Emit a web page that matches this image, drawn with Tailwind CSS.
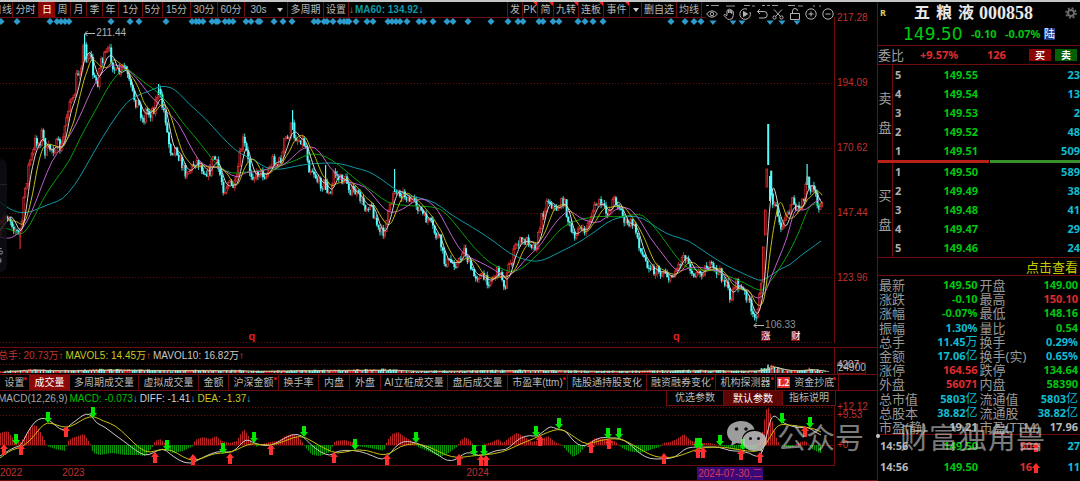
<!DOCTYPE html>
<html lang="zh-CN">
<head>
<meta charset="utf-8">
<meta name="viewport" content="width=device-width, initial-scale=1">
<title>五粮液 000858</title>
<script src="https://cdn.jsdelivr.net/npm/@tailwindcss/browser@4"></script>
</head>
<body class="bg-black">
<div class="relative min-h-screen w-full overflow-hidden border-t-2 border-[#c4c6c6] bg-black font-['Liberation_Sans','Noto_Sans_CJK_SC',sans-serif] text-[10px] leading-3 text-[#b8b8b8]">
<div class="flex w-full">

<!-- Charts -->
<main class="min-w-0 flex-1">
  <div class="relative flex">
    <nav class="flex h-4 min-w-0 flex-1 items-stretch overflow-hidden whitespace-nowrap border-b border-[#700c0c]" aria-label="周期">
      <button class="w-[13px] shrink-0 overflow-hidden border-r border-[#700c0c]"><span class="-ml-2">日线</span></button>
      <button class="w-[26px] shrink-0 border-r border-[#700c0c]">分时</button>
      <button class="w-4 shrink-0 bg-[#8c0808] text-white">日</button>
      <button class="w-4 shrink-0 border-r border-[#700c0c]">周</button>
      <button class="w-4 shrink-0 border-r border-[#700c0c]">月</button>
      <button class="w-4 shrink-0 border-r border-[#700c0c]">季</button>
      <button class="w-4 shrink-0 border-r border-[#700c0c]">年</button>
      <button class="w-6 shrink-0 border-r border-[#700c0c]">1分</button>
      <button class="w-5 shrink-0 border-r border-[#700c0c]">5分</button>
      <button class="w-7 shrink-0 border-r border-[#700c0c]">15分</button>
      <button class="w-[27px] shrink-0 border-r border-[#700c0c]">30分</button>
      <button class="w-[27px] shrink-0 border-r border-[#700c0c]">60分</button>
      <button class="w-[27px] shrink-0">30s</button>
      <button class="flex w-4 shrink-0 items-center justify-center border-r border-[#700c0c]" aria-label="更多周期"><svg class="h-1 w-[6px]" viewBox="0 0 6 4"><path d="M0 0h6L3 4z" fill="#ccc"/></svg></button>
      <button class="w-9 shrink-0 border-r border-[#700c0c]">多周期</button>
      <button class="w-[25px] shrink-0 border-r border-[#700c0c]">设置</button>
      <span class="flex items-center"><span class="w-[6px] text-[#a89c20]">↓</span><span class="font-bold text-[#0d9aa8]">MA60: 134.92</span><span class="text-[#48c8d8]">↓</span></span>
      <span class="flex-1"></span>
      <button class="w-4 shrink-0 border-x border-[#700c0c]">发</button>
      <button class="relative w-[15px] shrink-0 border-r border-[#700c0c]">PK<svg class="absolute right-0 top-0 size-1" viewBox="0 0 4 4"><path d="M0 0h4v4z" fill="#f22"/></svg></button>
      <button class="relative w-4 shrink-0 border-r border-[#700c0c]">简<svg class="absolute right-0 top-0 size-1" viewBox="0 0 4 4"><path d="M0 0h4v4z" fill="#f22"/></svg></button>
      <button class="relative w-[25px] shrink-0 border-r border-[#700c0c]">九转<svg class="absolute right-0 top-0 size-1" viewBox="0 0 4 4"><path d="M0 0h4v4z" fill="#f22"/></svg></button>
      <button class="relative w-[25px] shrink-0 border-r border-[#700c0c]">连板<svg class="absolute right-0 top-0 size-1" viewBox="0 0 4 4"><path d="M0 0h4v4z" fill="#f22"/></svg></button>
      <button class="relative w-[26px] shrink-0 border-r border-[#700c0c]">事件<svg class="absolute right-0 top-0 size-1" viewBox="0 0 4 4"><path d="M0 0h4v4z" fill="#f22"/></svg></button>
      <button class="flex w-3 shrink-0 items-center justify-center border-r border-[#700c0c]" aria-label="更多"><svg class="h-1 w-[6px]" viewBox="0 0 6 4"><path d="M0 0h6L3 4z" fill="#ccc"/></svg></button>
      <button class="w-[35px] shrink-0 border-r border-[#700c0c]">删自选</button>
      <button class="w-[25px] shrink-0 border-r border-[#700c0c]">均线</button>
      <span class="w-[133px] shrink-0"></span>
    </nav>
    <div class="w-[42px] shrink-0"></div>
    <!-- Floating drawing tools -->
    <div class="absolute right-[43px] top-0 z-10 flex h-[18px] w-[128px] items-end justify-between bg-black text-[#b4b4b4]">
      <svg class="absolute left-0 top-[3px] h-[2px] w-[118px]" viewBox="0 0 118 2" stroke="#999" fill="none"><path d="M0 .5h3M5 .5h8M20 1h9M38 .5h6M46 1h3M56 .5h3M61 .5h3M66 .5h6M82 .5h7M92 1h5M107 1h2M113 1h2"/></svg>
      <button aria-label="显示"><svg class="size-3" viewBox="0 0 12 12" fill="none" stroke="currentColor"><path d="M.5 6Q6-.5 11.5 6 6 12.500 .5 6z"/><circle cx="6" cy="6" r="1.800"/></svg></button>
      <button aria-label="拖动"><svg class="size-3" viewBox="0 0 12 12" fill="none" stroke="currentColor"><path d="M4 7.500V2.500q.7-1 1.500 0V5 1.500q.8-1 1.600 0V5 2q.8-.9 1.600 0v3.500-2q.8-.8 1.600 0v4q0 4-4 4-2 0-3-1.500L1 7.500q0-1.200 1.200-1L4 8"/></svg></button>
      <button aria-label="播放"><svg class="size-3" viewBox="0 0 12 12" fill="none" stroke="currentColor"><path d="M8 1.100A5.300 5.300 0 1 0 11 4"/><path d="M4.500 3.500v5L8.500 6z" fill="currentColor"/></svg></button>
      <button aria-label="撤销"><svg class="size-3" viewBox="0 0 12 12" fill="none" stroke="currentColor"><path d="M4 1L1.500 3.500 4 6M1.500 3.500H8a3 3 0 0 1 0 6.500H3"/></svg></button>
      <button aria-label="剪切"><svg class="size-3" viewBox="0 0 12 12" fill="none" stroke="currentColor"><path d="M2 1.500l6.500 7M10 1.500l-6.500 7"/><circle cx="2.500" cy="9.500" r="1.600"/><circle cx="9.500" cy="9.500" r="1.600"/></svg></button>
      <button aria-label="锁定"><svg class="size-3" viewBox="0 0 12 12" fill="none" stroke="currentColor"><path d="M1.500 5.500h9v6h-9zM3.500 5.500V3q0-2.500 2.500-2.500T8.500 3"/></svg></button>
      <button aria-label="放大"><svg class="size-3" viewBox="0 0 12 12" fill="none" stroke="currentColor"><circle cx="6" cy="6" r="5.200"/><path d="M3.500 6h5M6 3.500v5"/></svg></button>
      <button aria-label="缩小"><svg class="size-3" viewBox="0 0 12 12" fill="none" stroke="currentColor"><circle cx="6" cy="6" r="5.200"/><path d="M3.500 6h5"/></svg></button>
    </div>
  </div>

  <section class="flex" aria-label="K线">
    <div class="relative h-[325px] min-w-0 flex-1 border-r border-[#700c0c]">
      <svg id="price" class="block h-full w-full" viewBox="0 18 834 325" preserveAspectRatio="none"></svg>
      <span class="absolute left-[10.100%] top-[9px] flex items-center text-[#b0b0b0]"><svg class="h-[7px] w-3" viewBox="0 0 12 7" fill="none" stroke="#bbb"><path d="M11 3.500H1M3.500 1L1 3.500 3.500 6"/></svg>211.44</span>
      <span class="absolute left-[90.300%] top-[301px] flex items-center text-[#909090]"><svg class="h-[7px] w-3" viewBox="0 0 12 7" fill="none" stroke="#bbb"><path d="M11 3.500H1M3.500 1L1 3.500 3.500 6"/></svg>106.33</span>
      <b class="absolute left-[29.800%] top-[312px] text-[11px] text-[#e02020]">q</b>
      <b class="absolute left-[80.700%] top-[312px] text-[11px] text-[#e02020]">q</b>
      <span class="absolute left-[91.300%] top-[313px] h-[10px] bg-[#8c0c0c] text-[9px] leading-[10px] text-white">涨</span>
      <span class="absolute left-[94.900%] top-[313px] h-[10px] bg-[#8c0c0c] text-[9px] leading-[10px] text-white">财</span>
      <div class="absolute left-0 top-[141px] flex h-[113px] w-[7px] flex-col justify-between rounded-r-lg bg-[#0e0f14]/80 pb-[9px] pt-[25px]">
        <span class="h-px bg-[#22242a]"></span>
        <svg class="h-[15px] w-[3px]" viewBox="0 0 3 15" fill="none" stroke="#999"><path d="M0 .5h1.500M0 3h1q1.500 0 1.500 1.500T1 6H0M0 11h1.500M0 12.500h1q1 1-1 2"/></svg>
      </div>
    </div>
    <div class="-mt-[6px] w-[42px] shrink-0 pl-[2px] text-[#c03030]">
      <div class="h-[65px]">217.28</div><div class="h-[65px]">194.09</div><div class="h-[65px]">170.62</div><div class="h-[65px]">147.44</div><div>123.96</div>
    </div>
  </section>

  <section class="mt-1 flex border-t border-[#700c0c]" aria-label="成交量">
    <div class="min-w-0 flex-1 border-r border-[#700c0c]">
      <div class="flex h-4 items-center gap-[2px] whitespace-nowrap">
        <span class="-ml-[2px] text-[#c03030]">总手: 20.73万<span class="text-[#f04040]">↑</span></span>
        <span class="text-[#c8c820]">MAVOL5: 14.45万<span class="text-[#f04040]">↑</span></span>
        <span class="text-[#c8c8c8]">MAVOL10: 16.82万<span class="text-[#f04040]">↑</span></span>
      </div>
      <svg id="volume" class="block h-[9px] w-full overflow-visible" viewBox="0 364 834 9" preserveAspectRatio="none"></svg>
    </div>
    <div class="relative w-[42px] shrink-0 pl-[2px] pt-[11px] text-[#b8b8b8]">
      <div class="h-[3px]">4207</div><div class="w-[29px] overflow-visible border border-[#700c0c] leading-[10px]">24900</div>
    </div>
  </section>

  <nav class="flex h-[17px] items-stretch overflow-hidden whitespace-nowrap border-y border-[#700c0c]" aria-label="指标">
    <button class="relative w-[29px] shrink-0">设置<i class="absolute right-[2px] top-[2px] size-[3px] rounded-full bg-[#e01010]"></i></button>
    <button class="w-[41px] shrink-0 bg-[#8c0808] text-white">成交量</button>
    <button class="w-[69px] shrink-0 border-r border-[#700c0c]">多周期成交量</button>
    <button class="w-[60px] shrink-0 border-r border-[#700c0c]">虚拟成交量</button>
    <button class="w-[30px] shrink-0 border-r border-[#700c0c]">金额</button>
    <button class="relative w-[50px] shrink-0 border-r border-[#700c0c]">沪深金额<i class="absolute right-[1px] top-[2px] size-[3px] rounded-full bg-[#e01010]"></i></button>
    <button class="w-10 shrink-0 border-r border-[#700c0c]">换手率</button>
    <button class="w-[31px] shrink-0 border-r border-[#700c0c]">内盘</button>
    <button class="w-[31px] shrink-0 border-r border-[#700c0c]">外盘</button>
    <button class="w-[67px] shrink-0 border-r border-[#700c0c]">AI立桩成交量</button>
    <button class="w-[60px] shrink-0 border-r border-[#700c0c]">盘后成交量</button>
    <button class="relative w-[60px] shrink-0 border-r border-[#700c0c]">市盈率(ttm)<i class="absolute right-[1px] top-[2px] size-[3px] rounded-full bg-[#e01010]"></i></button>
    <button class="w-[79px] shrink-0 border-r border-[#700c0c]">陆股通持股变化</button>
    <button class="relative w-[69px] shrink-0 border-r border-[#700c0c]">融资融券变化<i class="absolute right-[1px] top-[2px] size-[3px] rounded-full bg-[#e01010]"></i></button>
    <button class="relative w-[60px] shrink-0 border-r border-[#700c0c]">机构探测器<i class="absolute right-[1px] top-[2px] size-[3px] rounded-full bg-[#e01010]"></i></button>
    <button class="relative flex w-[63px] shrink-0 items-center justify-center gap-1 border-r border-[#700c0c] pr-[3px]"><b class="bg-[#e02828] px-px font-['Liberation_Serif'] leading-[11px] text-white">L2</b>资金抄底<i class="absolute right-[2px] top-[2px] size-[3px] rounded-full bg-[#e01010]"></i></button>
  </nav>

  <section aria-label="MACD">
    <div class="flex h-[15px] items-stretch whitespace-nowrap">
      <div class="flex min-w-0 flex-1 items-center gap-[2px] overflow-hidden">
        <span class="-ml-[2px] text-[#a8a8a8]">MACD(12,26,9)</span>
        <span class="text-[#00c000]">MACD: -0.073<span class="text-[#48c8d8]">↓</span></span>
        <span class="text-[#d0d0d0]">DIFF: -1.41<span class="text-[#48c8d8]">↓</span></span>
        <span class="text-[#c8c820]">DEA: -1.37<span class="text-[#48c8d8]">↓</span></span>
      </div>
      <button class="w-[58px] border-x border-b border-[#700c0c]">优选参数</button>
      <button class="w-[58px] bg-[#5c0606] text-white">默认参数</button>
      <button class="w-[54px] border-x border-b border-[#700c0c]">指标说明</button>
      <div class="w-[41px] shrink-0"></div>
    </div>
    <div class="flex">
      <div class="h-[60px] min-w-0 flex-1 border-b border-r border-[#700c0c]">
        <svg id="macd" class="block h-full w-full overflow-visible" viewBox="0 405 834 59" preserveAspectRatio="none"></svg>
      </div>
      <div class="-mt-[5px] w-[42px] shrink-0 pl-[2px] text-[#c03030]"><div class="h-2">+12.12</div><div class="h-[30px]">+9.53</div><div>+0</div></div>
    </div>
    <div class="flex h-[14px] items-center text-[#c03030]">
      <span class="w-[7.100%]">2022</span><span class="w-[46.100%]">2023</span><span class="w-[26.300%]">2024</span><span class="whitespace-nowrap bg-[#3a0878] px-px leading-[13px] text-[#d83858]">2024-07-30,二</span>
    </div>
    <div class="h-[2px] border-t border-[#700c0c]"><div class="ml-[11.200%] h-px w-[4.500%] bg-[#8c0808]"></div></div>
  </section>
</main>

<!-- Quote panel -->
<aside class="w-[203px] shrink-0 border-l border-[#700c0c] font-['Noto_Sans','Noto_Sans_CJK_SC',sans-serif] text-[11px] font-bold">
  <header class="h-11 border-b border-[#700c0c]">
    <div class="flex h-[21px] items-center">
      <span class="w-9 pl-[2px] text-[9px] text-[#d8d060]">R</span>
      <h1 class="flex flex-1 items-center gap-[5px] whitespace-nowrap font-['Liberation_Serif','Noto_Sans_CJK_SC',serif] text-[18px] leading-5 text-[#e8e8e8]"><span class="flex gap-[6px] text-[16px]"><span>五</span><span>粮</span><span>液</span></span>000858</h1>
      <button class="mr-[3px]" aria-label="设置"><svg class="size-3" viewBox="0 0 12 12" fill="none" stroke="#6c6c6c"><circle cx="6" cy="6" r="3" stroke-width="2"/><circle cx="6" cy="6" r="4.900" stroke-width="1.800" stroke-dasharray="1.900 1.950"/></svg></button>
    </div>
    <div class="flex h-[22px] items-center whitespace-nowrap text-[#00c810]">
      <span class="w-[93px] pl-[25px] font-['DejaVu_Sans'] text-[17px] font-normal">149.50</span>
      <span class="w-[34px]">-0.10</span><span class="w-[39px]">-0.07%</span>
      <span class="bg-[#1c3c88] text-[11px] font-normal leading-[12px] text-white">陆</span>
    </div>
  </header>
  <div class="flex h-[19px] items-center border-b border-[#700c0c] text-[#e02c2c]">
    <span class="w-[42px] text-[13px] font-normal text-[#a0a0a0]">委比</span><span class="w-[67px]">+9.57%</span><span class="w-[42px]">126</span>
    <button class="mr-1 h-3 w-[22px] bg-[#8c0404] text-[10px] leading-3 text-white">买</button>
    <button class="h-3 w-[22px] bg-[#046004] text-[10px] leading-3 text-white">卖</button>
  </div>
  <div class="flex h-[95px]">
    <div class="flex w-[15px] flex-col items-center justify-center gap-3 border-r border-[#700c0c] text-[13px] font-normal leading-[17px] text-[#a0a0a0]"><span>卖</span><span>盘</span></div>
    <table class="h-full flex-1 text-[#00c810]" id="asks"><tbody></tbody></table>
  </div>
  <div class="flex h-[3px]"><i class="w-[55%] bg-[#b82018]"></i><i class="ml-px flex-1 bg-[#38902c]"></i></div>
  <div class="flex h-[95px] border-b border-[#700c0c]">
    <div class="flex w-[15px] flex-col items-center justify-center gap-3 border-r border-[#700c0c] text-[13px] font-normal leading-[17px] text-[#a0a0a0]"><span>买</span><span>盘</span></div>
    <table class="h-full flex-1 text-[#00c810]" id="bids"><tbody></tbody></table>
  </div>
  <div class="flex h-[18px] items-center justify-end border-b border-[#700c0c] pr-[2px] text-[13px] font-normal"><a href="#" class="text-[#c8c800]">点击查看</a></div>
  <dl class="grid h-[159px] grid-cols-2 gap-x-[2px] border-b border-[#700c0c] pl-px pr-[2px] pt-[2px] font-bold" id="stats"></dl>
  <table class="h-[42px] w-full text-[#b8b8b8]"><tbody>
    <tr><td class="w-[52px] pl-[2px]">14:56</td><td class="w-12 text-right text-[#00c810]">149.50</td><td class="text-right text-[#e02c2c]">50<svg class="inline h-[10px] w-2" viewBox="0 0 8 10"><path d="M4 0l4 5H6v5H2V5H0z" fill="#ff2c2c"/></svg></td><td class="w-10 text-right text-[#10bcd0]">27</td></tr>
    <tr><td class="pl-[2px]">14:56</td><td class="text-right text-[#00c810]">149.50</td><td class="text-right text-[#e02c2c]">16<svg class="inline h-[10px] w-2" viewBox="0 0 8 10"><path d="M4 0l4 5H6v5H2V5H0z" fill="#ff2c2c"/></svg></td><td class="text-right text-[#10bcd0]">11</td></tr>
  </tbody></table>
</aside>
</div>

<!-- Watermark -->
<div class="pointer-events-none absolute right-[35px] top-[414px] z-20 flex items-center whitespace-nowrap font-['Noto_Sans_CJK_SC',sans-serif] text-[29px] font-normal leading-10 text-[#d0d0d0]/60">
  <svg class="mr-[10px] h-8 w-10" viewBox="0 0 40 32"><path d="M14 1C6 1 0 6 0 12.500c0 4 2 7 5 9L4 26l5.500-3c2 .6 4 .8 6 .6C13 15 20 9 27.500 9.500 26 4 20.500 1 14 1z" fill="#b8b8b8" fill-opacity=".85"/><path d="M27.500 11C20.500 11 15.500 15.500 15.500 21s5 10 12 10c1.500 0 3-.2 4.400-.7l4.100 2-1-3.600c2.700-1.800 4.500-4.500 4.500-7.700 0-5.500-5-10-12-10z" fill="#c4c4c4" fill-opacity=".85"/><g fill="#111"><circle cx="9.500" cy="9" r="1.800"/><circle cx="19" cy="9" r="1.800"/><circle cx="23.500" cy="18.500" r="1.500"/><circle cx="31.500" cy="18.500" r="1.500"/></g></svg>
  <span>公众号</span><i class="ml-3 mr-5 size-1 rounded-full bg-[#c8c8c8]"></i><span>财富独角兽</span>
</div>
</div>

<template id="level"><tr><td class="w-[14px] pl-[2px] text-[#b0b0b0]"></td><td class="w-[71px] text-right"></td><td class="text-right text-[#10bcd0]"></td></tr></template>
<template id="stat"><div class="flex items-center justify-between whitespace-nowrap leading-[14px]"><dt class="text-[13px] font-normal text-[#989898]"></dt><dd></dd></div></template>

<script>
const NS = 'http://www.w3.org/2000/svg';
function add(svg, tag, attrs) {
  const e = document.createElementNS(NS, tag);
  for (const k in attrs) e.setAttribute(k, attrs[k]);
  svg.appendChild(e);
}
const parse = s => s.trim().split(/\s+/).map(p => p.split(',').map(Number));
function at(pts, x) {
  for (let i = 1; i < pts.length; i++) if (x <= pts[i][0]) {
    const [a, b] = pts[i - 1], [c, d] = pts[i];
    return b + (d - b) * (x - a) / (c - a);
  }
  return pts[pts.length - 1][1];
}
let seed = 7;
const rnd = () => (seed = (seed * 16807) % 2147483647) / 2147483647;
function curve(svg, pts, color, w = 1) {
  let d = `M${pts[0]}`;
  for (let i = 1; i < pts.length - 1; i++) d += `Q${pts[i]} ${(pts[i][0] + pts[i + 1][0]) / 2},${(pts[i][1] + pts[i + 1][1]) / 2}`;
  d += `L${pts[pts.length - 1]}`;
  add(svg, 'path', { d, fill: 'none', stroke: color, 'stroke-width': w });
}
const grid = (svg, ys) => ys.forEach(y => add(svg, 'path', { d: `M0 ${y}.5H834`, stroke: '#6a0c0c', 'stroke-dasharray': '1 2' }));

/* price */
const P = document.getElementById('price');
grid(P, [83, 148, 213, 277, 342]);
const path = parse(`0,232 5,216 8,214 12,222 16,230 19,237 22,220 25,190 28,170 30,160 33,155 36,137 38,145 42,133 46,155 50,148 56,146 62,148 65,125 69,100 73,105 77,75 80,68 82,58 84,42 87,60 90,50 94,82 98,80 101,58 104,60 108,52 111,56 116,75 120,72 125,67 128,80 132,95 136,100 140,108 143,122 146,110 150,113 155,105 158,90 161,102 165,115 168,140 171,152 176,148 180,160 185,172 190,170 196,160 200,165 205,172 210,172 213,155 217,165 221,178 224,192 228,182 232,187 236,185 239,160 243,140 246,150 250,173 255,176 260,172 266,176 271,165 273,158 277,165 282,158 285,137 288,140 292,122 294,135 298,140 302,139 306,148 309,168 313,170 318,182 323,185 325,180 328,194 331,195 334,170 338,178 342,180 346,180 350,190 355,192 360,198 366,208 370,203 375,218 379,233 384,232 388,215 392,200 394,186 397,192 401,193 405,195 410,200 415,205 420,208 424,218 430,222 436,236 440,240 444,262 449,262 455,263 460,262 463,247 466,254 469,265 474,276 480,275 485,280 490,281 495,275 498,270 502,278 505,287 509,265 512,260 515,248 518,242 523,242 529,240 533,246 537,245 541,220 545,207 548,199 552,205 555,210 560,205 564,200 568,220 572,235 575,240 578,225 583,233 588,225 592,212 598,202 602,205 606,213 610,210 613,199 618,203 622,215 627,226 632,222 637,235 641,253 646,262 650,265 654,272 658,270 661,274 665,270 670,281 674,272 679,265 684,253 688,262 692,271 697,274 703,271 708,265 714,270 720,273 725,283 728,290 731,300 735,282 740,288 746,295 749,300 752,318 755,318 758,305 761,290 763,270 765,230 767,180 769,165 771,190 774,208 777,205 779,226 782,234 785,220 790,210 793,200 796,210 800,208 804,198 807,170 809,190 813,190 817,200 819,208 822,205`);
const step = 1.65, closes = [];
for (let i = 0, prev = 235; i * step <= 822; i++) {
  const x = i * step + 0.5, c = at(path, x) + (rnd() - 0.5) * (x < 165 ? 15 : 10);
  const spike = x > 762 && x < 771;
  const top = Math.min(prev, c), h = Math.max(1, Math.abs(c - prev));
  const up = c < prev, col = up ? '#e03030' : '#54fcfc';
  if (!spike) {
    add(P, 'path', { d: `M${x} ${top - rnd() * 4}V${top + h + rnd() * 4}`, stroke: col, 'stroke-width': 0.8 });
    add(P, 'rect', { x: x - 0.8, y: top, width: up ? 1.4 : 2, height: h, fill: up ? '#300' : col, stroke: up ? col : 'none', 'stroke-width': 0.7 });
  }
  closes.push([x, at(path, x)]);
  prev = c;
}
[[763, 247, 282], [765, 210, 235], [766.5, 169, 187]].forEach(([x, a, b]) => add(P, 'rect', { x: x - 0.5, y: a, width: 1.6, height: b - a, fill: '#300', stroke: '#e83030', 'stroke-width': 0.8 }));
add(P, 'rect', { x: 767.2, y: 124, width: 2, height: 41, fill: '#54fcfc' });
add(P, 'rect', { x: 769, y: 176, width: 2, height: 25, fill: '#54fcfc' });
[[84, 34, 60], [158, 84, 95], [292, 110, 130], [325, 165, 190], [394, 169, 192], [806.5, 164, 185], [19.5, 232, 249]].forEach(([x, a, b], i) => add(P, 'rect', { x, y: a, width: 1.2, height: b - a, fill: i == 6 ? '#d82c2c' : '#54fcfc' }));

curve(P, parse('0,202 10,210 25,214 40,208 52,203 62,200 75,185 85,168 95,150 110,125 125,104 135,96 150,91 158,87 165,86 175,89 190,105 205,118 220,135 235,150 245,156 255,160 265,168 280,170 300,165 320,163 340,163 355,168 368,171 380,178 393,188 405,195 420,198 435,202 450,214 465,223 480,232 495,242 510,254 525,260 540,262 560,252 580,242 600,228 612,219 628,216 642,217 660,230 672,236 688,240 705,252 725,265 740,272 755,279 762,281 770,276 780,269 790,265 800,256 810,249 821,241'), '#0c98a6');
curve(P, parse('0,228 8,228 15,232 22,235 30,225 38,209 47,192 60,174 70,160 80,138 90,120 100,102 112,80 122,70 128,69 135,75 145,83 155,90 162,97 172,107 182,122 195,137 207,152 218,167 232,174 245,172 260,171 275,168 285,164 297,160 308,154 320,154 332,160 345,170 360,183 375,193 388,203 400,205 415,206 437,207 447,214 460,230 475,249 490,263 500,268 510,272 520,270 530,262 545,247 555,235 565,225 580,219 600,216 615,217 627,216 637,214 645,216 660,234 672,251 682,264 692,270 715,270 730,277 745,283 755,289 763,291 770,282 780,268 790,251 800,230 808,208 815,203 821,205'), '#089c08');
curve(P, parse('0,237 8,239 15,236 22,230 32,212 42,185 52,160 62,147 72,132 82,112 92,88 102,72 112,64 120,66 130,71 140,82 150,96 160,105 168,113 178,122 188,142 198,160 207,167 220,167 232,176 240,177 245,172 260,172 272,167 283,166 293,157 300,150 307,147 315,147 322,155 330,168 342,180 352,183 365,186 375,198 385,210 392,213 402,210 413,202 421,198 430,202 438,210 448,229 458,247 466,256 480,262 495,270 505,278 515,272 525,260 533,252 540,246 552,227 562,215 570,210 580,218 590,222 600,223 612,212 620,207 630,208 640,220 650,238 662,253 673,268 680,272 690,267 700,267 712,270 722,272 735,283 745,288 753,296 758,299 765,294 770,280 778,260 787,239 794,210 800,210 806,210 813,203 821,199'), '#c060c8');
function average(n) {
  return closes.map(([x], i) => {
    const w = closes.slice(Math.max(0, i - n + 1), i + 1);
    return [x, w.reduce((s, p) => s + p[1], 0) / w.length];
  });
}
curve(P, average(10), '#c8c010');
curve(P, average(5), '#d8d8d8');

/* event markers */
[1,17,50,57,61,65,69,111,130,139,166,192,196,199,203,212,216,218,225,229,233,246,251,258,260,274,283,292,314,318,324,327,333,340,344,347,349,356,367,373,388,392,396,400,407,419,424,433,447,453,468,491,508,518,523,539,543,553,559,578,585,593,603,671,685,694,701].forEach(x =>
  add(P, 'path', { d: `M${x - 3.5} 21.5l3.500-3.500 3.500 3.500-3.500 3.500z`, fill: '#2c9ccc' }));
[713,733,742,770,782,797].forEach(x => add(P, 'path', { d: `M${x - 3.5} 20.500h7l-3.500 4.500z`, fill: '#2c9ccc' }));

/* volume */
const V = document.getElementById('volume');
grid(V, [364]);
const vol = parse('0,2 20,3 30,4 45,3 80,3 100,4 160,3 240,3 250,2 300,3 320,3 390,4 410,2 500,3 550,3 600,2 700,3 755,2 765,6 768,9 775,6 785,3 800,3 808,5 822,2');
for (let x = 0; x < 822; x += 1.65) {
  const h = at(vol, x) * (0.55 + rnd() * 0.6);
  add(V, 'rect', { x, y: 373 - h, width: 1.5, height: h, fill: rnd() > 0.45 ? '#78f0f0' : '#e83838' });
}
curve(V, vol.map(([x, v]) => [x + 4, 373 - v * 0.8]), '#d8d060', 0.7);
curve(V, vol.map(([x, v]) => [x + 7, 373 - v * 0.7]), '#d8d8d8', 0.7);

/* MACD */
const M = document.getElementById('macd');
grid(M, [406, 414]);
add(M, 'path', { d: 'M0 444.500H834', stroke: '#500808' });
const hist = parse('0,12 8,14 12,8 20,2 22,5 27,12 31,18 36,20 40,14 45,4 47,-1 55,-4 65,-6 68,4 72,7 78,9 84,11 88,5 91,0 93,-8 100,-10 112,-8 125,-10 138,-10 145,-11 152,-3 155,4 160,6 165,2 167,-5 173,-8 183,-6 193,-1 195,5 203,8 210,6 216,9 222,4 230,2 237,4 240,10 244,16 248,10 252,2 257,-2 262,1 270,3 278,4 285,9 292,11 298,9 303,2 306,-3 312,-10 320,-11 330,-7 335,4 345,5 352,3 358,-1 370,-3 384,-6 387,4 392,11 398,13 405,8 412,4 418,-2 430,-7 440,-12 447,-9 457,-2 460,4 465,8 470,5 475,-2 482,0 492,3 498,6 503,2 510,8 517,12 525,8 532,3 540,5 548,9 555,3 562,0 566,-5 573,-12 580,-8 588,2 595,7 605,6 615,4 622,-3 628,-6 640,-8 650,-5 660,-2 663,2 670,3 677,6 684,11 690,5 698,2 710,2 722,-1 735,-5 748,-4 756,-5 758,1 762,10 766,35 768,38 771,30 776,8 780,0 790,-3 800,3 806,4 812,-4 820,-8');
for (let x = 0.5; x < 822; x += 2) {
  const v = at(hist, x);
  add(M, 'path', { d: `M${x} 444v${-v}`, stroke: v > 0 ? '#b82424' : '#0a940a', 'stroke-width': 1.2 });
}
curve(M, parse('0,455 8,450 15,446 21,445 27,432 35,420 42,417 48,418 56,425 63,430 70,424 78,418 86,412 92,415 96,422 105,426 115,434 125,441 135,449 145,455 153,452 163,447 170,453 180,460 190,463 200,458 212,452 222,450 232,452 240,444 246,438 252,441 260,444 270,445 280,440 292,433 302,434 310,443 320,451 330,455 335,451 345,449 360,450 373,455 382,459 388,455 395,446 403,440 412,441 420,443 430,449 440,455 447,460 456,459 463,453 470,451 478,455 488,453 497,449 506,449 513,443 520,437 530,434 537,436 545,429 551,425 556,428 565,429 571,437 578,444 585,445 590,442 600,436 612,437 620,437 630,443 640,453 650,458 662,458 675,457 684,448 692,446 705,446 720,446 730,450 740,450 750,452 758,457 763,450 767,433 771,417 775,414 780,420 790,425 800,427 808,426 815,431 821,434'), '#c8c8c8');
curve(M, parse('0,457 10,449 20,447 30,440 40,427 47,421 57,424 66,427 76,423 85,417 94,415 103,420 115,424 128,436 140,448 150,452 160,448 172,449 183,456 193,460 203,457 215,452 230,452 242,446 252,442 270,445 285,440 300,434 312,440 325,448 338,453 352,449 367,449 380,454 390,453 400,445 415,442 430,446 445,454 458,457 470,455 495,453 508,449 520,443 533,438 548,431 558,428 566,430 577,438 587,444 600,439 620,437 635,445 650,454 662,457 677,456 692,450 705,446 725,446 740,449 755,451 763,448 770,436 778,423 790,424 805,426 815,428 821,431'), '#c8c010');
parse('16,438 48,416 93,411 167,444 223,447 254,436 304,430 355,443 416,436 474,449 484,449 536,430 559,422 608,432 619,432 697,442 700,442 720,439 743,443 782,417 810,421').forEach(([x, y]) =>
  add(M, 'path', { d: `M${x} ${y + 6}l-4-5h2v-6h4v6h2z`, fill: '#00e800' }));
parse('4,449 21,449 66,431 155,457 193,459 230,458 271,449 334,457 387,459 459,459 481,460 486,460 540,440 591,447 609,443 664,458 698,452 703,452 741,454 760,457 805,431').forEach(([x, y]) =>
  add(M, 'path', { d: `M${x} ${y - 6}l-4 5h2v6h4v-6h2z`, fill: '#ff3030' }));

/* order book */
function book(id, rows) {
  const body = document.querySelector(`#${id} tbody`), t = document.getElementById('level');
  rows.forEach(r => {
    const n = t.content.cloneNode(true);
    n.querySelectorAll('td').forEach((c, i) => c.textContent = r[i]);
    body.appendChild(n);
  });
}
book('asks', [['5', '149.55', '23'], ['4', '149.54', '13'], ['3', '149.53', '2'], ['2', '149.52', '48'], ['1', '149.51', '509']]);
book('bids', [['1', '149.50', '589'], ['2', '149.49', '38'], ['3', '149.48', '41'], ['4', '149.47', '29'], ['5', '149.46', '24']]);

/* statistics */
const G = '#00c810', R = '#e02c2c', C = '#10bcd0', W = '#b8b8b8';
[['最新', '149.50', G], ['开盘', '149.00', G], ['涨跌', '-0.10', G], ['最高', '150.10', R], ['涨幅', '-0.07%', G], ['最低', '148.16', G],
 ['振幅', '1.30%', C], ['量比', '0.54', G], ['总手', '11.45万', C], ['换手', '0.29%', C], ['金额', '17.06亿', C], ['换手(实)', '0.65%', C],
 ['涨停', '164.56', R], ['跌停', '134.64', G], ['外盘', '56071', R], ['内盘', '58390', G], ['总市值', '5803亿', C], ['流通值', '5803亿', C],
 ['总股本', '38.82亿', C], ['流通股', '38.82亿', C], ['市盈(静)', '19.21', W], ['市盈(TTM)', '17.96', W]].forEach(([k, v, color]) => {
  const n = document.getElementById('stat').content.cloneNode(true);
  n.querySelector('dt').textContent = k;
  const dd = n.querySelector('dd');
  dd.textContent = v.replace(/[万亿]/, '');
  dd.style.color = color;
  const unit = v.match(/[万亿]/);
  if (unit) {
    const s = document.createElement('span');
    s.textContent = unit[0];
    s.style.fontWeight = 400;
    s.style.fontSize = '12px';
    dd.appendChild(s);
  }
  document.getElementById('stats').appendChild(n);
});
</script>
</body>
</html>
